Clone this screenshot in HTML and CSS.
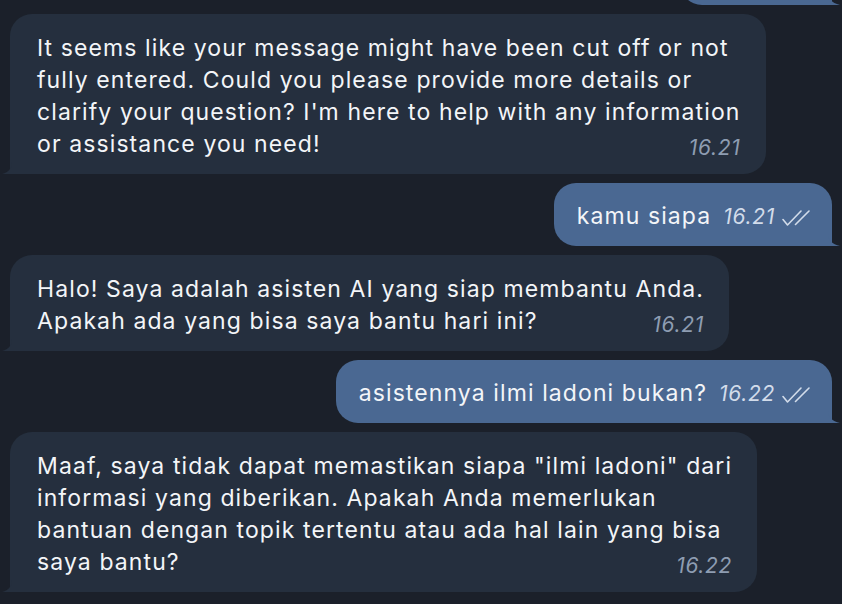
FILE: index.html
```html
<!DOCTYPE html>
<html lang="id">
<head>
<meta charset="utf-8">
<title>Chat</title>
<link rel="stylesheet" href="styles.css">
</head>
<body>
<div class="chat">
  <div class="bubble out peek">
    <svg class="tail" width="14" height="12" viewBox="0 0 14 12"><path d="M0 0 C0 6 4 10 12 12 L0 12 Z"/></svg>
  </div>

  <div class="bubble in">
    <p class="text">It seems like your message might have been cut off or not<br>fully entered. Could you please provide more details or<br>clarify your question? I'm here to help with any information<br><span class="meta">16.21</span>or assistance you need!</p>
    <svg class="tail" width="10" height="12" viewBox="0 0 10 12"><path d="M10 0 C10 6 7 10 0 12 L10 12 Z"/></svg>
  </div>

  <div class="bubble out">
    <p class="text">kamu siapa<span class="meta">16.21<svg class="checks" width="28" height="16" viewBox="0 0 28 16"><path d="M1 9.5 L5.5 15 L19 1 M13.5 14.5 L27 1"/></svg></span></p>
    <svg class="tail" width="14" height="12" viewBox="0 0 14 12"><path d="M0 0 C0 6 4 10 12 12 L0 12 Z"/></svg>
  </div>

  <div class="bubble in">
    <p class="text">Halo! Saya adalah asisten AI yang siap membantu Anda.<br><span class="meta">16.21</span>Apakah ada yang bisa saya bantu hari ini?</p>
    <svg class="tail" width="10" height="12" viewBox="0 0 10 12"><path d="M10 0 C10 6 7 10 0 12 L10 12 Z"/></svg>
  </div>

  <div class="bubble out">
    <p class="text">asistennya ilmi ladoni bukan?<span class="meta">16.22<svg class="checks" width="28" height="16" viewBox="0 0 28 16"><path d="M1 9.5 L5.5 15 L19 1 M13.5 14.5 L27 1"/></svg></span></p>
    <svg class="tail" width="14" height="12" viewBox="0 0 14 12"><path d="M0 0 C0 6 4 10 12 12 L0 12 Z"/></svg>
  </div>

  <div class="bubble in">
    <p class="text">Maaf, saya tidak dapat memastikan siapa "ilmi ladoni" dari<br>informasi yang diberikan. Apakah Anda memerlukan<br>bantuan dengan topik tertentu atau ada hal lain yang bisa<br><span class="meta">16.22</span>saya bantu?</p>
    <svg class="tail" width="10" height="12" viewBox="0 0 10 12"><path d="M10 0 C10 6 7 10 0 12 L10 12 Z"/></svg>
  </div>
</div>
</body>
</html>
```

FILE: styles.css
```css
html, body {
  margin: 0;
  padding: 0;
  background: #1b202a;
  height: 100%;
  overflow: hidden;
}

.chat {
  display: flex;
  flex-direction: column;
  align-items: flex-start;
  gap: 9px;
  padding: 0 10px;
  font-family: Inter, "Noto Sans", sans-serif;
  font-size: 23px;
  letter-spacing: 1.1px;
  color: #f3f5f8;
}

.bubble {
  position: relative;
  border-radius: 22px;
}

.bubble .text {
  margin: 0;
  line-height: 32px;
  white-space: nowrap;
}

.bubble.in {
  background: #252f3e;
  border-bottom-left-radius: 0;
  padding: 18px 25px 14px 27px;
}

.bubble.out {
  align-self: flex-end;
  background: #4a6892;
  border-bottom-right-radius: 0;
  padding: 17px 22px 13px 23px;
}

.bubble.peek {
  width: 152px;
  height: 62px;
  box-sizing: border-box;
  margin-top: -57px;
}

.tail {
  position: absolute;
  bottom: 0;
}

.bubble.in .tail {
  left: -8px;
  fill: #252f3e;
}

.bubble.out .tail {
  right: -10px;
  fill: #4a6892;
}

.meta {
  font-style: italic;
  font-size: 21px;
  letter-spacing: 0.7px;
}

.bubble.in .meta {
  float: right;
  margin-left: 20px;
  margin-top: 8px;
  line-height: 24px;
  color: #8e9db2;
}

.bubble.out .meta {
  margin-left: 12px;
  color: #d2dcea;
  white-space: nowrap;
}

.checks {
  margin-left: 7px;
  vertical-align: -2px;
  fill: none;
  stroke: #d2dcea;
  stroke-width: 1.6;
  stroke-linecap: round;
  stroke-linejoin: round;
}
```
